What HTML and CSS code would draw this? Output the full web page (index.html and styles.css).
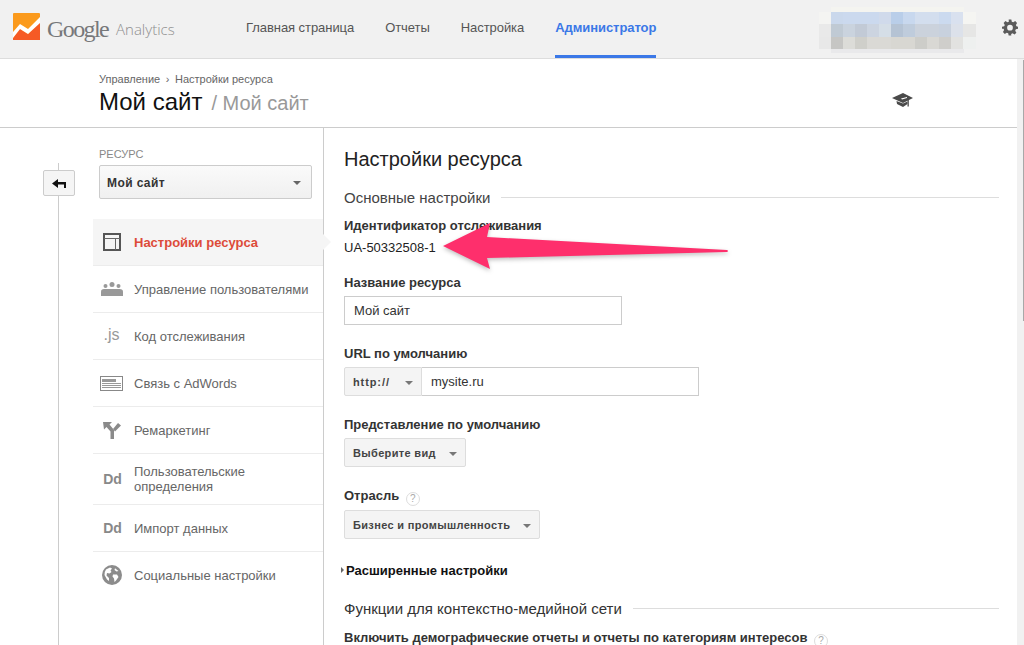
FILE: index.html
```html
<!DOCTYPE html>
<html lang="ru">
<head>
    <meta charset="UTF-8">
    <title>Настройки ресурса</title>
    <link rel="stylesheet" href="styles.css">
</head>
<body>
    <header class="topbar">
        <div class="logo">
            <svg class="logo-mark" width="27" height="27" viewBox="0 0 27 27">
                <rect width="27" height="27" rx="1" fill="#fb9a1c"/>
                <path d="M0 27V25L7 16L15 21L27 9V27Z" fill="#f65a25"/>
                <path d="M0 19L7 11L15 16L27 4V10L15 21L7 16L0 25Z" fill="#fff"/>
            </svg>
            <span class="logo-google">Google</span>
            <span class="logo-product">Analytics</span>
        </div>
        <nav class="nav">
            <a class="nav-item">Главная страница</a>
            <a class="nav-item">Отчеты</a>
            <a class="nav-item">Настройка</a>
            <a class="nav-item active">Администратор</a>
        </nav>
        <svg class="account" width="157" height="46" viewBox="0 0 157 46" shape-rendering="crispEdges">
            <rect x="12" y="0" width="133" height="5" fill="#f4f4f0"/>
            <rect x="0" y="5" width="12" height="12" fill="#f4f4f2"/>
            <rect x="12" y="5" width="12" height="12" fill="#cad8ec"/>
            <rect x="24" y="5" width="36" height="12" fill="#cbd9ee"/>
            <rect x="60" y="5" width="12" height="12" fill="#d0daeb"/>
            <rect x="72" y="5" width="12" height="12" fill="#b9cee9"/>
            <rect x="84" y="5" width="12" height="12" fill="#c8d8ee"/>
            <rect x="96" y="5" width="24" height="12" fill="#d3deee"/>
            <rect x="120" y="5" width="12" height="12" fill="#cbdaef"/>
            <rect x="132" y="5" width="12" height="12" fill="#d9e1ef"/>
            <rect x="144" y="5" width="13" height="12" fill="#f5f5f2"/>
            <rect x="0" y="17" width="12" height="13" fill="#e9e9e9"/>
            <rect x="12" y="17" width="12" height="13" fill="#c0cad4"/>
            <rect x="24" y="17" width="12" height="13" fill="#cad3de"/>
            <rect x="36" y="17" width="12" height="13" fill="#c2cad6"/>
            <rect x="48" y="17" width="12" height="13" fill="#ccd4e0"/>
            <rect x="60" y="17" width="12" height="13" fill="#d5dee7"/>
            <rect x="72" y="17" width="12" height="13" fill="#b5c3d4"/>
            <rect x="84" y="17" width="12" height="13" fill="#bfccdc"/>
            <rect x="96" y="17" width="24" height="13" fill="#cbd2dc"/>
            <rect x="120" y="17" width="12" height="13" fill="#c8d1de"/>
            <rect x="132" y="17" width="12" height="13" fill="#dce1ea"/>
            <rect x="144" y="17" width="13" height="13" fill="#e6e6e5"/>
            <rect x="0" y="30" width="12" height="12" fill="#e8e8e8"/>
            <rect x="12" y="30" width="12" height="12" fill="#c6c6c4"/>
            <rect x="24" y="30" width="12" height="12" fill="#dcdcd8"/>
            <rect x="36" y="30" width="12" height="12" fill="#cfcfca"/>
            <rect x="48" y="30" width="24" height="12" fill="#dad9d5"/>
            <rect x="72" y="30" width="24" height="12" fill="#d8d7d2"/>
            <rect x="96" y="30" width="12" height="12" fill="#cdcdc9"/>
            <rect x="108" y="30" width="12" height="12" fill="#d9d8d4"/>
            <rect x="120" y="30" width="12" height="12" fill="#cfcecb"/>
            <rect x="132" y="30" width="12" height="12" fill="#e2e2e0"/>
            <rect x="144" y="30" width="13" height="12" fill="#eef0ef"/>
            <rect x="12" y="42" width="133" height="4" fill="#e9e9eb"/>
        </svg>
        <svg class="gear" width="16" height="17" viewBox="0 0 24 24">
            <path fill="#5b5b5b" fill-rule="evenodd" d="M10 0h4l.7 3.300 2.200.9L19.800 2.400l2.800 2.800-1.800 2.900.9 2.200L24 11v3l-3.300.7-.9 2.200 1.800 2.900-2.800 2.800-2.900-1.800-2.200.9L14 24h-4l-.7-3.300-2.200-.9-2.900 1.800-2.800-2.800 1.800-2.900-.9-2.200L0 14v-3l3.300-.7.9-2.200L2.400 5.200l2.800-2.800 2.900 1.800 2.200-.9zM12 8a4.300 4.300 0 1 0 0 8.600A4.300 4.300 0 0 0 12 8z"/>
        </svg>
    </header>

    <section class="page-head">
        <div class="crumbs">Управление <span class="crumb-sep">›</span> Настройки ресурса</div>
        <div class="page-title">
            <h1>Мой сайт</h1>
            <span class="page-sub">/ Мой сайт</span>
            <svg class="cap" width="22" height="14" viewBox="0 0 22 14">
                <path fill="#4a4a4a" d="M0 5L11 0L21 5L11 10Z"/>
                <path fill="#4a4a4a" d="M4.500 8L11 10.500L15.500 8.500V11L11 14L5 11Z"/>
                <path fill="#fff" d="M9 5.500L15 4V5L10 6.500Z"/>
                <rect x="15.500" y="5" width="1.300" height="8.500" fill="#4a4a4a"/>
            </svg>
        </div>
    </section>

    <div class="layout">
        <aside class="back-col">
            <button class="back-btn">
                <svg width="14" height="10" viewBox="0 0 14 10"><path fill="#111" d="M6 0V3H14V9H12V5.500H6V9L0 4.500Z"/></svg>
            </button>
        </aside>
        <aside class="sidebar">
            <div class="prop-label">РЕСУРС</div>
            <div class="prop-select">
                <span>Мой сайт</span>
                <i class="caret"></i>
            </div>
            <ul class="menu">
                <li class="menu-item selected">
                    <span class="menu-icon">
                        <svg width="18" height="18" viewBox="0 0 18 18"><path fill="none" stroke="#555" stroke-width="2" d="M1 1H17V17H1Z"/><path fill="none" stroke="#666" d="M1 5.500H17M12.500 5.500V17"/></svg>
                    </span>
                    <span class="menu-text">Настройки ресурса</span>
                </li>
                <li class="menu-item">
                    <span class="menu-icon">
                        <svg width="22" height="14" viewBox="0 0 22 14"><g fill="#999"><circle cx="4.500" cy="4" r="2"/><circle cx="11" cy="2.500" r="2.500"/><circle cx="17.500" cy="4" r="2"/><path d="M0 14V9.500Q0 7 3 7H18.500Q22 7 22 9.500V14Z"/></g></svg>
                    </span>
                    <span class="menu-text">Управление пользователями</span>
                </li>
                <li class="menu-item">
                    <span class="menu-icon js-icon">.js</span>
                    <span class="menu-text">Код отслеживания</span>
                </li>
                <li class="menu-item">
                    <span class="menu-icon">
                        <svg width="23" height="15" viewBox="0 0 23 15"><rect x=".5" y=".5" width="22" height="14" fill="#fff" stroke="#888"/><rect x="2" y="3" width="14" height="3" fill="#999"/><path stroke="#999" d="M2 7.500H21M2 9.500H21M2 11.500H21"/></svg>
                    </span>
                    <span class="menu-text">Связь с AdWords</span>
                </li>
                <li class="menu-item">
                    <span class="menu-icon">
                        <svg width="18" height="18" viewBox="0 0 18 18"><path fill="#8a8a8a" d="M0 1H9L6.500 3.500L11 9V18H7.500V10.500L3.500 6L1 8.500Z"/><path fill="#8a8a8a" d="M10 8L15 2L18 4.500L12 10.500Z"/></svg>
                    </span>
                    <span class="menu-text">Ремаркетинг</span>
                </li>
                <li class="menu-item tall">
                    <span class="menu-icon dd-icon">Dd</span>
                    <span class="menu-text">Пользовательские определения</span>
                </li>
                <li class="menu-item">
                    <span class="menu-icon dd-icon">Dd</span>
                    <span class="menu-text">Импорт данных</span>
                </li>
                <li class="menu-item last">
                    <span class="menu-icon">
                        <svg width="20" height="20" viewBox="0 0 20 20"><circle cx="10" cy="10" r="10" fill="#8c8c8c"/><path fill="#fff" d="M4 4.500L8 2.500L10 3.500L8.500 5.500L9.500 7L7.500 8.500L5 8L4.500 10.500L7 13V16L5 14.500L2.500 10L2.800 7ZM11 9.500L15 9.500L16.500 12L14 15.500L12.500 17L12 13.500L10.500 11.500ZM13 3.300L16.500 6L14.500 6.500L12.500 5Z"/></svg>
                    </span>
                    <span class="menu-text">Социальные настройки</span>
                </li>
            </ul>
        </aside>
        <main class="content">
            <h2 class="content-title">Настройки ресурса</h2>
            <div class="section-head"><span>Основные настройки</span></div>

            <div class="field-id">
                <label class="field-label">Идентификатор отслеживания</label>
                <div class="field-value">UA-50332508-1</div>
            </div>

            <div class="field">
                <label class="field-label">Название ресурса</label>
                <div class="text-input name-input">Мой сайт</div>
            </div>

            <div class="field">
                <label class="field-label">URL по умолчанию</label>
                <div class="url-row">
                    <div class="gray-btn url-proto">http:// <i class="caret"></i></div>
                    <div class="text-input url-input">mysite.ru</div>
                </div>
            </div>

            <div class="field">
                <label class="field-label">Представление по умолчанию</label>
                <div class="gray-btn">Выберите вид <i class="caret"></i></div>
            </div>

            <div class="field">
                <label class="field-label">Отрасль <span class="help">?</span></label>
                <div class="gray-btn">Бизнес и промышленность <i class="caret"></i></div>
            </div>

            <div class="advanced"><i class="adv-arrow"></i>Расширенные настройки</div>

            <div class="section-head second"><span>Функции для контекстно-медийной сети</span></div>
            <label class="field-label">Включить демографические отчеты и отчеты по категориям интересов <span class="help">?</span></label>
        </main>
    </div>

    <svg class="pink-arrow" width="290" height="48" viewBox="0 0 290 48">
        <path fill="#fe2f6c" d="M0 23L47 0L44 14L284 27Q286 28 284 29L44 35L47 46Z"/>
    </svg>

    <div class="scrollbar"></div>
</body>
</html>
```

FILE: styles.css
```css
html, body {
    height: 645px;
    overflow: hidden;
}
body {
    margin: 0;
    position: relative;
    font-family: "Liberation Sans", Arial, sans-serif;
    font-size: 13px;
    color: #333;
    background-color: #fff;
}
.topbar {
    display: flex;
    align-items: center;
    height: 58px;
    background-color: #f1f1f1;
    border-bottom: 1px solid #ddd;
}
.logo {
    display: flex;
    align-items: center;
    width: 246px;
    padding-left: 13px;
    box-sizing: border-box;
}
.logo-mark {
    flex: none;
    margin: -5px 7px 0 0;
}
.logo-google {
    font-family: "Liberation Serif", serif;
    font-size: 24px;
    letter-spacing: -1.600px;
    color: #77787a;
    margin-right: 8px;
}
.logo-product {
    font-family: "Open Sans", sans-serif;
    font-weight: 300;
    font-size: 15px;
    color: #8e8e8e;
}
.nav {
    display: flex;
    align-self: stretch;
    width: 573px;
    gap: 31px;
}
.nav-item {
    display: flex;
    align-items: center;
    height: 55px;
    color: #555;
    font-size: 13px;
    letter-spacing: -.06px;
}
.nav-item.active {
    color: #3b78e7;
    font-weight: bold;
    border-bottom: 3px solid #3b78e7;
}
.account {
    flex: none;
    margin-top: 2px;
}
.gear {
    flex: none;
    margin: -4px 0 0 26px;
}
.page-head {
    height: 69px;
    padding: 14px 0 0 99px;
    box-sizing: border-box;
    border-bottom: 1px solid #ccc;
}
.crumbs {
    font-size: 11px;
    color: #666;
    line-height: 13px;
}
.crumb-sep {
    margin: 0 2.500px;
}
.page-title {
    display: flex;
    align-items: baseline;
    margin-top: 2px;
}
.page-title h1 {
    margin: 0;
    font-size: 24px;
    line-height: 28px;
    font-weight: normal;
    color: #111;
}
.page-sub {
    margin-left: 9px;
    font-size: 20px;
    color: #999;
}
.cap {
    position: absolute;
    left: 892px;
    top: 93px;
}
.layout {
    display: flex;
    height: 517px;
}
.back-col {
    width: 93px;
    flex: none;
    position: relative;
}
.back-col::before {
    content: "";
    position: absolute;
    left: 58px;
    top: 35px;
    bottom: 0;
    width: 1px;
    background-color: #ccc;
}
.back-btn {
    position: absolute;
    left: 43px;
    top: 42px;
    width: 32px;
    height: 26px;
    padding: 0;
    background-color: #f5f5f5;
    border: 1px solid #ccc;
    border-radius: 2px;
}
.back-btn svg {
    display: block;
    margin: 1px auto 0;
}
.sidebar {
    width: 231px;
    flex: none;
    box-sizing: border-box;
    border-right: 1px solid #ccc;
    padding-top: 20px;
}
.prop-label {
    margin-left: 6px;
    font-size: 11px;
    line-height: 13px;
    color: #888;
}
.prop-select {
    display: flex;
    justify-content: space-between;
    align-items: center;
    margin: 4px 0 0 6px;
    width: 213px;
    height: 34px;
    box-sizing: border-box;
    padding: 1px 10px 0 7px;
    border: 1px solid #ccc;
    border-radius: 2px;
    background: linear-gradient(#fafafa, #f0f0f0);
    font-size: 12px;
    font-weight: bold;
    color: #333;
    letter-spacing: .4px;
}
.caret {
    display: inline-block;
    width: 0;
    height: 0;
    border-left: 4px solid transparent;
    border-right: 4px solid transparent;
    border-top: 4px solid #666;
}
.menu {
    list-style: none;
    margin: 20px 0 0;
    padding: 0;
}
.menu-item {
    display: flex;
    align-items: center;
    height: 46px;
    border-bottom: 1px solid #ececec;
    color: #666;
    font-size: 13px;
    line-height: 15px;
}
.menu-item.selected {
    position: relative;
    background-color: #f5f5f5;
    color: #dd4b39;
    font-weight: bold;
}
.menu-item.selected::after {
    content: "";
    position: absolute;
    right: -8px;
    top: 15px;
    border-top: 8px solid transparent;
    border-bottom: 8px solid transparent;
    border-left: 8px solid #f5f5f5;
}
.menu-item.tall {
    height: 50px;
}
.menu-item.last {
    border-bottom: none;
}
.menu-icon {
    display: flex;
    justify-content: center;
    align-items: center;
    width: 37px;
    margin-right: 4px;
    flex: none;
}
.js-icon {
    font-size: 16px;
    color: #999;
    padding-bottom: 4px;
    box-sizing: border-box;
}
.dd-icon {
    font-size: 14px;
    font-weight: bold;
    color: #888;
    padding-left: 2px;
    box-sizing: border-box;
}
.menu-text {
    width: 150px;
}
.menu-item:nth-child(2) .menu-text, .menu-item.last .menu-text {
    width: auto;
    white-space: nowrap;
}
.content {
    flex: 1;
    padding: 20px 25px 0 20px;
    min-width: 0;
}
.content-title {
    margin: 0;
    font-size: 20px;
    line-height: 22px;
    font-weight: normal;
    color: #222;
}
.section-head {
    display: flex;
    align-items: center;
    margin-top: 19px;
    font-size: 15px;
    line-height: 17px;
    color: #444;
}
.section-head::after {
    content: "";
    flex: 1;
    height: 1px;
    margin-left: 11px;
    background-color: #ddd;
}
.section-head.second {
    margin-top: 22px;
    color: #333;
}
.field-label {
    display: block;
    font-size: 13px;
    line-height: 15px;
    font-weight: bold;
    color: #333;
}
.field-id {
    margin-top: 12px;
}
.field-value {
    margin-top: 7px;
    font-size: 13px;
    line-height: 15px;
    color: #222;
}
.field {
    margin-top: 21px;
}
.field-id + .field {
    margin-top: 20px;
}
.text-input {
    box-sizing: border-box;
    height: 29px;
    line-height: 27px;
    padding: 0 9px;
    font-size: 13px;
    color: #333;
    background-color: #fff;
    border: 1px solid #ccc;
}
.name-input {
    width: 278px;
    margin-top: 6px;
}
.url-row {
    display: flex;
    margin-top: 6px;
}
.url-input {
    width: 277px;
    border-left: none;
}
.gray-btn {
    display: inline-flex;
    align-items: center;
    box-sizing: border-box;
    height: 29px;
    padding: 0 8px;
    gap: 13px;
    margin-top: 6px;
    font-size: 11px;
    font-weight: bold;
    letter-spacing: .34px;
    color: #444;
    background-color: #f4f4f4;
    border: 1px solid #ddd;
    border-radius: 2px;
}
.url-proto {
    margin-top: 0;
    width: 78px;
    letter-spacing: .9px;
    border-radius: 2px 0 0 2px;
    justify-content: space-between;
}
.gray-btn .caret {
    margin-top: 2px;
    border-top-color: #777;
}
.help {
    display: inline-block;
    width: 14px;
    height: 14px;
    margin: 0 0 -2px 3px;
    box-sizing: border-box;
    border: 1px solid #ddd;
    border-radius: 50%;
    text-align: center;
    font-size: 10px;
    line-height: 12px;
    font-weight: normal;
    color: #aaa;
    vertical-align: -2px;
}
.advanced {
    position: relative;
    margin-top: 24px;
    padding-left: 2px;
    font-size: 13px;
    line-height: 15px;
    font-weight: bold;
    color: #111;
}
.adv-arrow {
    position: absolute;
    left: -3px;
    top: 4px;
    border-top: 3px solid transparent;
    border-bottom: 3px solid transparent;
    border-left: 3px solid #666;
}
.second + .field-label {
    margin-top: 13px;
}
.pink-arrow {
    position: absolute;
    left: 443px;
    top: 223px;
    filter: drop-shadow(0 2px 2px rgba(0,0,0,.25));
}
.scrollbar {
    position: absolute;
    right: 0;
    top: 59px;
    bottom: 0;
    width: 7px;
    background-color: #f1f1f1;
}
.scrollbar::after {
    content: "";
    position: absolute;
    right: 0;
    top: 1px;
    width: 1.500px;
    height: 261px;
    background-color: #a8a8a8;
}
```
